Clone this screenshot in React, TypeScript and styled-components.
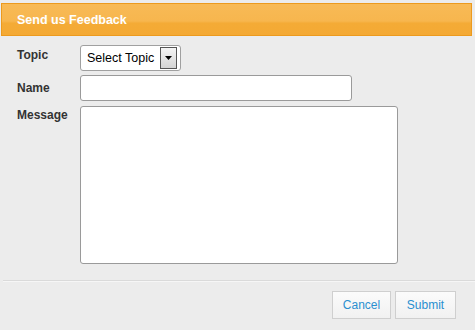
import React from "react";
import styled, { createGlobalStyle } from "styled-components";

const Global = createGlobalStyle`
  html, body { margin: 0; padding: 0; background: #ececec; }
  body { font-family: "Liberation Sans", Arial, sans-serif; }
`;

const Page = styled.div`
  width: 475px;
  height: 330px;
  background: #ececec;
  box-sizing: border-box;
  padding-top: 3px;
  display: flex;
  flex-direction: column;
`;

const Header = styled.div`
  box-sizing: border-box;
  margin: 0 3px 0 1px;
  height: 33px;
  border: 1px solid #ec9a1e;
  background: linear-gradient(#f8ba56 0%, #f7b64e 55%, #f4ab36 62%, #f4a934 100%);
  display: flex;
  align-items: center;
  padding-left: 15px;
  color: #ffffff;
  font-weight: bold;
  font-size: 12.5px;
`;

const Form = styled.div`
  display: grid;
  grid-template-columns: 63px auto;
  justify-content: start;
  padding: 9px 0 0 17px;
  row-gap: 4px;
`;

const Label = styled.div<{ $pt: number }>`
  font-size: 12px;
  font-weight: bold;
  color: #333333;
  line-height: 14px;
  padding-top: ${(p) => p.$pt}px;
`;

const SelectBox = styled.div`
  box-sizing: border-box;
  width: 101px;
  height: 26px;
  border: 1px solid #a0a0a0;
  border-radius: 3px;
  background: #ffffff;
  display: flex;
  align-items: center;
  justify-content: space-between;
  padding: 0 3px 0 6px;
  font-size: 12.5px;
  color: #000;
`;

const ArrowBtn = styled.div`
  box-sizing: border-box;
  width: 17px;
  height: 22px;
  border: 1px solid #555;
  background: linear-gradient(#f4f4f4, #d4d4d4);
  display: flex;
  align-items: center;
  justify-content: center;
`;

const TextInput = styled.div`
  box-sizing: border-box;
  width: 272px;
  height: 26px;
  border: 1px solid #9a9a9a;
  border-radius: 3px;
  background: #ffffff;
`;

const TextArea = styled.div`
  box-sizing: border-box;
  width: 318px;
  height: 158px;
  border: 1px solid #9a9a9a;
  border-radius: 3px;
  background: #ffffff;
  margin-top: 1px;
`;

const Divider = styled.div`
  margin: 16px 0 0 3px;
  height: 1px;
  background: #dadada;
  border-bottom: 1px solid #f6f6f6;
`;

const Footer = styled.div`
  display: flex;
  justify-content: flex-end;
  gap: 4px;
  padding: 9px 19px 0 0;
`;

const Button = styled.button<{ $w: number }>`
  box-sizing: border-box;
  width: ${(p) => p.$w}px;
  height: 28px;
  border: 1px solid #cfcfcf;
  background: linear-gradient(#fbfbfb, #f1f1f1);
  color: #2a8fd0;
  font-family: "Liberation Sans", Arial, sans-serif;
  font-size: 12px;
  padding: 0;
  cursor: pointer;
`;

export default function App() {
  return (
    <>
      <Global />
      <Page>
        <Header>Send us Feedback</Header>
        <Form>
          <Label $pt={3}>Topic</Label>
          <SelectBox>
            <span>Select Topic</span>
            <ArrowBtn>
              <svg width="7" height="4" viewBox="0 0 7 4">
                <polygon points="0,0 7,0 3.5,4" fill="#000" />
              </svg>
            </ArrowBtn>
          </SelectBox>
          <Label $pt={6}>Name</Label>
          <TextInput />
          <Label $pt={3}>Message</Label>
          <TextArea />
        </Form>
        <Divider />
        <Footer>
          <Button $w={59}>Cancel</Button>
          <Button $w={61}>Submit</Button>
        </Footer>
      </Page>
    </>
  );
}
